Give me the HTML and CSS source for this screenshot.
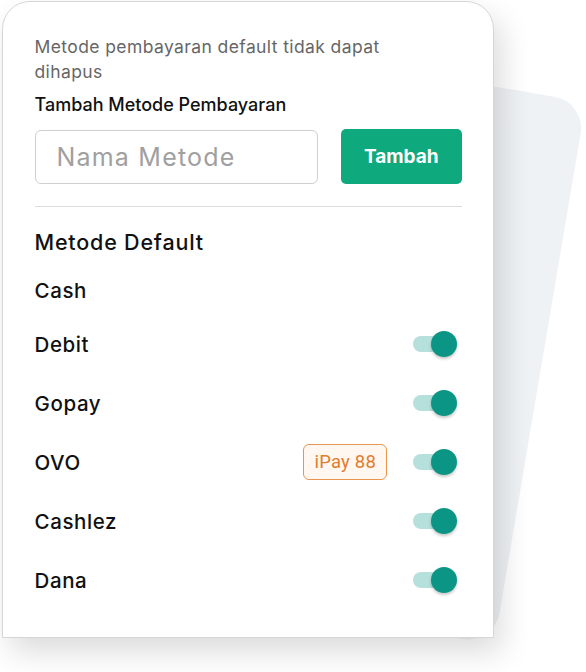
FILE: index.html
```html
<!DOCTYPE html>
<html lang="id">
<head>
<meta charset="utf-8">
<title>Metode Pembayaran</title>
<link rel="stylesheet" href="styles.css">
</head>
<body>
<div class="stage">
  <div class="back-card"></div>
  <div class="card">
    <p class="note">Metode pembayaran default tidak dapat dihapus</p>
    <p class="label">Tambah Metode Pembayaran</p>
    <div class="add-row">
      <input class="input" type="text" placeholder="Nama Metode">
      <button class="btn" type="button">Tambah</button>
    </div>
    <hr class="divider">
    <h2 class="section-title">Metode Default</h2>
    <div class="row row-plain"><span class="name">Cash</span></div>
    <div class="list">
      <div class="row"><span class="name">Debit</span><span class="toggle"><span class="track"></span><span class="knob"></span></span></div>
      <div class="row"><span class="name">Gopay</span><span class="toggle"><span class="track"></span><span class="knob"></span></span></div>
      <div class="row"><span class="name">OVO</span><span class="badge">iPay 88</span><span class="toggle"><span class="track"></span><span class="knob"></span></span></div>
      <div class="row"><span class="name">Cashlez</span><span class="toggle"><span class="track"></span><span class="knob"></span></span></div>
      <div class="row"><span class="name">Dana</span><span class="toggle"><span class="track"></span><span class="knob"></span></span></div>
    </div>
  </div>
</div>
</body>
</html>
```
FILE: styles.css
```css
* { box-sizing: border-box; }
html, body {
  margin: 0;
  padding: 0;
  background: #ffffff;
}
body {
  width: 586px;
  height: 672px;
  overflow: hidden;
  font-family: Inter, "Open Sans", sans-serif;
  color: #141414;
}
.stage {
  position: relative;
  width: 586px;
  height: 672px;
  padding: 1px 0 0 2px;
}
.back-card {
  position: absolute;
  left: 106px;
  top: 102px;
  width: 480px;
  height: 550px;
  border-radius: 32px;
  background: linear-gradient(to right, #e9ecef, #eff2f5 85%);
  transform-origin: top right;
  transform: rotate(9.6deg);
}
.card {
  position: relative;
  width: 492px;
  height: 637px;
  background: #ffffff;
  border: 1.5px solid #d6d6d6;
  border-radius: 28px 28px 0 0;
  box-shadow: 8px 14px 30px rgba(0, 0, 0, 0.14);
  padding: 32px 31px 0 31.5px;
}
.note {
  margin: 0;
  max-width: 370px;
  font-size: 17.5px;
  line-height: 25px;
  letter-spacing: 0.4px;
  color: #666666;
}
.label {
  margin: 8px 0 0;
  font-size: 18px;
  line-height: 25px;
  font-weight: 500;
  color: #111111;
}
.add-row {
  display: flex;
  gap: 23px;
  margin-top: 13px;
}
.input {
  width: 283px;
  height: 54px;
  border: 1px solid #cfcfcf;
  border-radius: 6px;
  padding: 0 21px;
  font-family: inherit;
  font-size: 25px;
  letter-spacing: 1.2px;
  color: #333;
  outline: none;
}
.input::placeholder { color: #a0a0a0; }
.btn {
  width: 122px;
  height: 55px;
  border: none;
  border-radius: 5px;
  background: #0fa97e;
  color: #ffffff;
  font-family: inherit;
  font-size: 19px;
  font-weight: 700;
  margin-top: -1px;
}
.divider {
  margin: 22px 0 0;
  border: none;
  border-top: 1px solid #dcdcdc;
  height: 0;
}
.section-title {
  margin: 21px 0 0;
  font-size: 21.5px;
  line-height: 28px;
  font-weight: 500;
  letter-spacing: 0.8px;
  color: #111111;
}
.row {
  display: flex;
  align-items: center;
  height: 40px;
}
.row-plain {
  height: 28px;
  margin-top: 20px;
}
.name {
  font-size: 20.5px;
  font-weight: 500;
  letter-spacing: 0.6px;
  flex: 1;
  color: #111111;
}
.list {
  display: flex;
  flex-direction: column;
  gap: 19px;
  margin-top: 20px;
}
.badge {
  height: 36px;
  padding: 0 10px;
  display: flex;
  align-items: center;
  border: 1.5px solid #e8954f;
  border-radius: 6px;
  background: #fff7f0;
  color: #e27d2f;
  font-family: Roboto, "Open Sans", sans-serif;
  font-size: 18.5px;
  letter-spacing: 0.2px;
  margin-right: 26px;
}
.toggle {
  position: relative;
  width: 44px;
  height: 28px;
  margin-right: 5px;
}
.track {
  position: absolute;
  left: 0;
  top: 6px;
  width: 38px;
  height: 16px;
  border-radius: 8px;
  background: #b6e0dc;
}
.knob {
  position: absolute;
  right: 0;
  top: 1px;
  width: 26px;
  height: 26px;
  border-radius: 50%;
  background: #0b9584;
  box-shadow: 0 2px 3px rgba(0, 0, 0, 0.22);
}
```
